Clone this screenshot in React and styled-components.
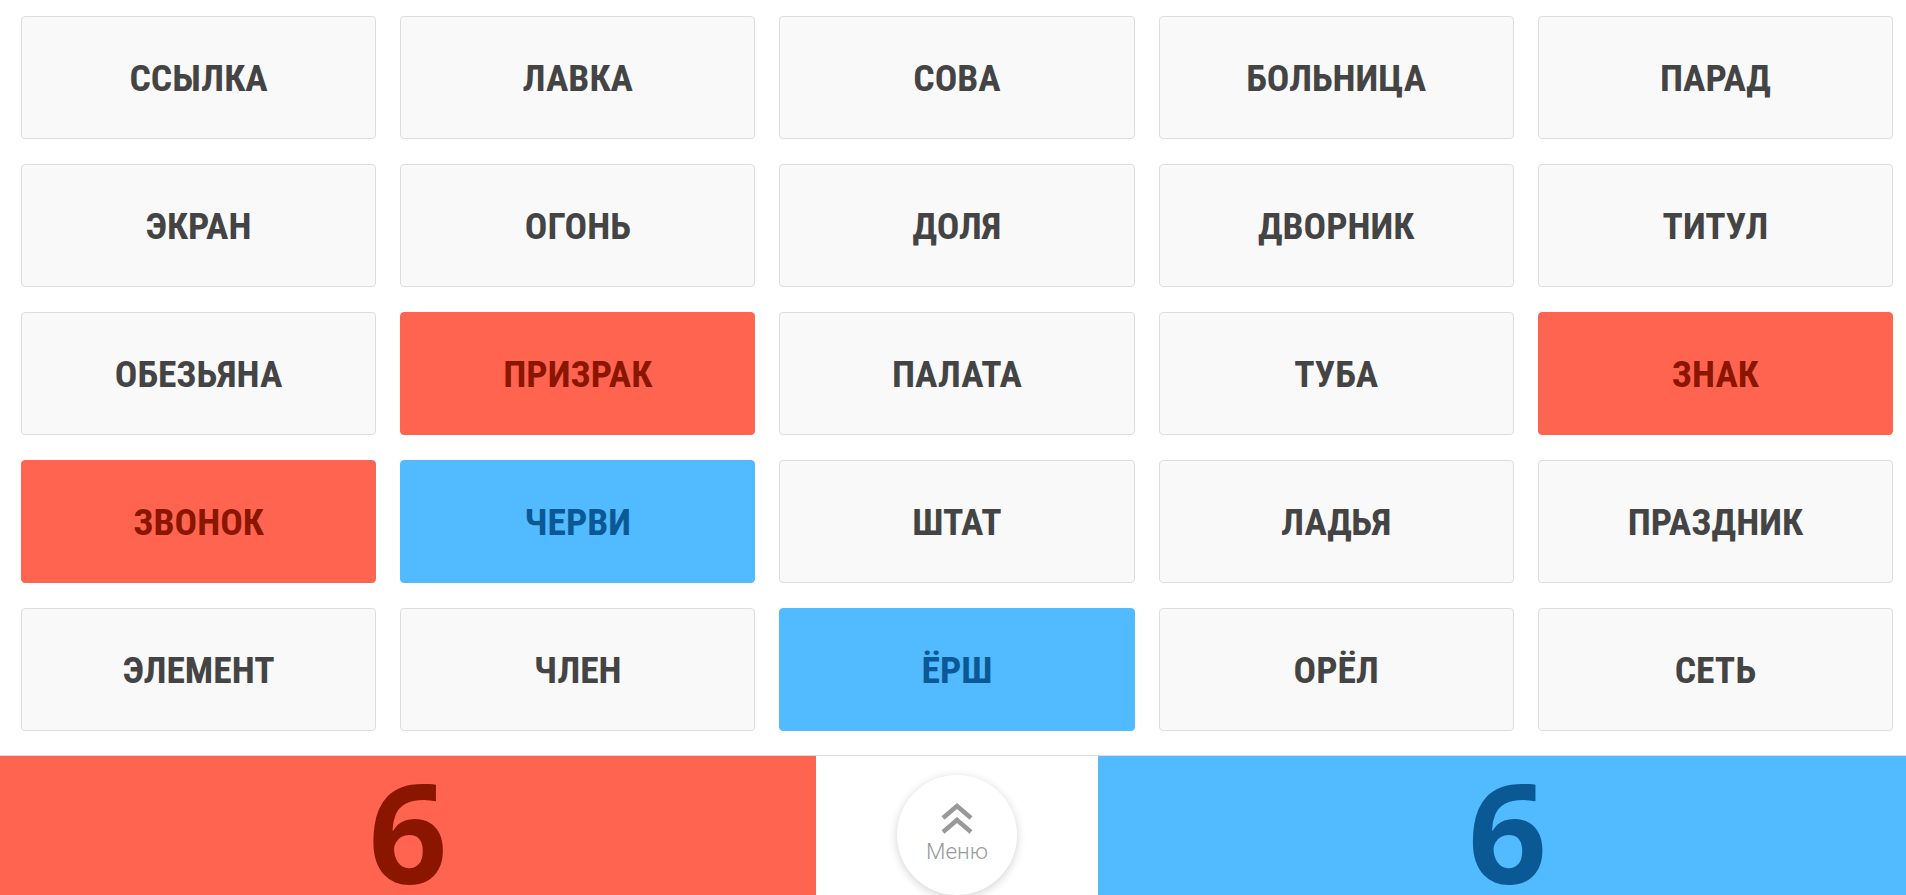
import React from "react";
import styled, { createGlobalStyle } from "styled-components";

const words = [
  ["ССЫЛКА", "n"], ["ЛАВКА", "n"], ["СОВА", "n"], ["БОЛЬНИЦА", "n"], ["ПАРАД", "n"],
  ["ЭКРАН", "n"], ["ОГОНЬ", "n"], ["ДОЛЯ", "n"], ["ДВОРНИК", "n"], ["ТИТУЛ", "n"],
  ["ОБЕЗЬЯНА", "n"], ["ПРИЗРАК", "red"], ["ПАЛАТА", "n"], ["ТУБА", "n"], ["ЗНАК", "red"],
  ["ЗВОНОК", "red"], ["ЧЕРВИ", "blue"], ["ШТАТ", "n"], ["ЛАДЬЯ", "n"], ["ПРАЗДНИК", "n"],
  ["ЭЛЕМЕНТ", "n"], ["ЧЛЕН", "n"], ["ЁРШ", "blue"], ["ОРЁЛ", "n"], ["СЕТЬ", "n"],
];

const palette = {
  n: { bg: "#f9f9f9", fg: "#444444", border: "#dddddd" },
  red: { bg: "#ff6450", fg: "#8b1600", border: "#ff6450" },
  blue: { bg: "#52baff", fg: "#0b5994", border: "#52baff" },
};

const GlobalStyle = createGlobalStyle`
  html, body {
    margin: 0;
    padding: 0;
    background: #fff;
    font-family: "Roboto", "Liberation Sans", sans-serif;
  }
`;

const Page = styled.div`
  width: 1906px;
  height: 895px;
  display: flex;
  flex-direction: column;
  overflow: hidden;
`;

const Board = styled.div`
  display: grid;
  grid-template-columns: repeat(5, 1fr);
  grid-auto-rows: 123px;
  column-gap: 24px;
  row-gap: 25px;
  padding: 16px 13px 24px 21px;
`;

const Card = styled.div`
  display: flex;
  align-items: center;
  justify-content: center;
  background: ${(p) => palette[p.$team].bg};
  color: ${(p) => palette[p.$team].fg};
  border: 1px solid ${(p) => palette[p.$team].border};
  border-radius: 4px;
  font-family: "Roboto", sans-serif;
  font-stretch: condensed;
  font-weight: 700;
  font-size: 37.5px;
  cursor: pointer;
  user-select: none;
`;

const ScoreBar = styled.div`
  display: flex;
  height: 140px;
  border-top: 1px solid #dddddd;
`;

const Score = styled.div`
  flex: ${(p) => (p.$grow ? "1" : "0 0 816px")};
  display: flex;
  align-items: center;
  justify-content: center;
  background: ${(p) => palette[p.$team].bg};
  color: ${(p) => palette[p.$team].fg};
  font-family: "Open Sans", sans-serif;
  font-weight: 700;
  font-size: 138px;
  line-height: 1;
  padding-top: 8px;
  padding-left: ${(p) => (p.$grow ? "11px" : "0")};
  box-sizing: border-box;
`;

const Middle = styled.div`
  flex: 0 0 282px;
  display: flex;
  align-items: center;
  justify-content: center;
  background: #fff;
`;

const MenuButton = styled.button`
  width: 120px;
  height: 120px;
  border-radius: 50%;
  border: none;
  background: #fff;
  box-shadow: 0 2px 10px rgba(0, 0, 0, 0.18);
  display: flex;
  flex-direction: column;
  align-items: center;
  justify-content: center;
  gap: 6px;
  color: #999;
  font-family: "Roboto", sans-serif;
  font-weight: 300;
  font-size: 22.5px;
  line-height: 1;
  cursor: pointer;
  padding: 0 0 4px;
  margin-top: 18px;
`;

const Chevrons = () => (
  <svg width="34" height="31" viewBox="0 0 34 31" fill="none" stroke="#999" strokeWidth="4.5">
    <polyline points="3,15 17,3 31,15" />
    <polyline points="3,29 17,17 31,29" />
  </svg>
);

export default function App() {
  return (
    <Page>
      <GlobalStyle />
      <Board>
        {words.map(([w, t]) => (
          <Card key={w} $team={t}>
            {w}
          </Card>
        ))}
      </Board>
      <ScoreBar>
        <Score $team="red">6</Score>
        <Middle>
          <MenuButton>
            <Chevrons />
            Меню
          </MenuButton>
        </Middle>
        <Score $team="blue" $grow>
          6
        </Score>
      </ScoreBar>
    </Page>
  );
}
